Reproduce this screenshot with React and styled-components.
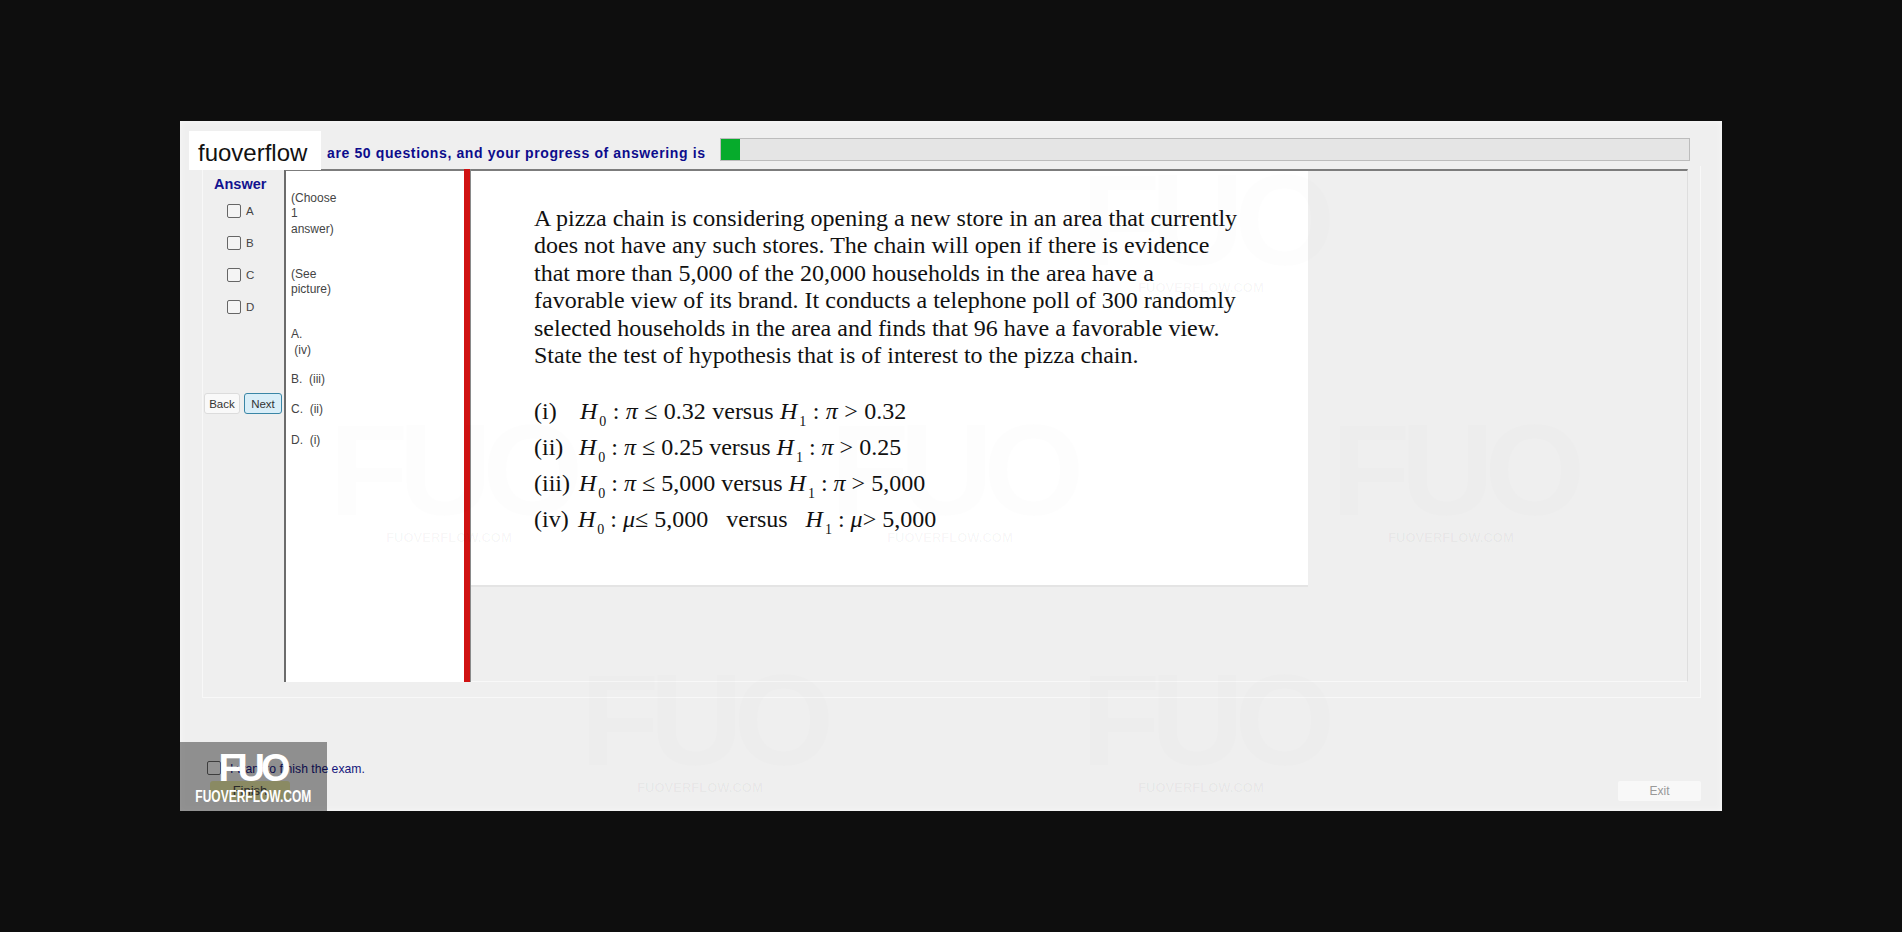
import React from "react";
import styled, { createGlobalStyle } from "styled-components";

const Global = createGlobalStyle`
  html, body { margin: 0; padding: 0; background: #0e0e0e; }
  body { font-family: "Liberation Sans", Arial, sans-serif; }
`;

const Page = styled.div`
  width: 1902px;
  height: 932px;
  padding: 121px 0 0 180px;
  box-sizing: border-box;
  overflow: hidden;
`;

const ExamWindow = styled.div`
  position: relative;
  width: 1542px;
  height: 690px;
  box-sizing: border-box;
  padding: 0 21px 10px 22px;
  background: #efefef;
  box-shadow: inset 0 0 6px #f8f8f8;
  display: flex;
  flex-direction: column;
  overflow: hidden;
`;

const Header = styled.div`
  display: flex;
  align-items: center;
  height: 23px;
  margin: 17px 11px 0 125px;
`;

const ProgressText = styled.span`
  width: 393px;
  font-size: 14px;
  font-weight: 700;
  color: #0c0c8c;
  white-space: nowrap;
  letter-spacing: 0.62px;
  padding-top: 7px;
`;

const ProgressTrack = styled.div`
  flex: 1;
  height: 100%;
  box-sizing: border-box;
  background: #e5e5e5;
  border: 1px solid #bcbcbc;
`;

const ProgressFill = styled.div`
  height: 100%;
  background: #06ab2c;
`;

const GroupBox = styled.div`
  display: flex;
  height: 532px;
  margin-top: 5px;
  box-sizing: border-box;
  padding: 3px 12px 15px 0;
  border: 1px solid #f8f8f8;
  border-top: 0;
`;

const AnswerColumn = styled.div`
  width: 81px;
  flex: none;
  display: flex;
  flex-direction: column;
  align-items: flex-start;
`;

const AnswerTitle = styled.div`
  margin: 7px 0 0 11px;
  font-size: 14.5px;
  font-weight: 700;
  line-height: 16px;
  color: #13138f;
`;

const AnswerList = styled.div`
  display: flex;
  flex-direction: column;
  gap: 19px;
  margin: 12px 0 0 24px;
`;

const AnswerRow = styled.label`
  display: flex;
  align-items: center;
  gap: 5px;
  height: 13px;
  font-size: 11.5px;
  color: #444;
`;

const Box = styled.span`
  width: 12px;
  height: 12px;
  flex: none;
  background: #f4f4f4;
  border: 1px solid #666;
  border-radius: 2px;
`;

const NavRow = styled.div`
  display: flex;
  gap: 4px;
  margin: 80px 0 0 1px;
`;

const NavButton = styled.div`
  display: flex;
  align-items: center;
  justify-content: center;
  height: 21px;
  width: ${(p) => (p.$primary ? "38px" : "36px")};
  box-sizing: border-box;
  font-size: 11.5px;
  color: #333;
  border-radius: 3px;
  background: ${(p) => (p.$primary ? "#d9eef8" : "#f9f9f9")};
  border: 1px solid ${(p) => (p.$primary ? "#3a86a6" : "#dcdcdc")};
`;

const OptionPane = styled.div`
  width: 180px;
  flex: none;
  box-sizing: border-box;
  background: #fff;
  border-left: 2px solid #6c6c6c;
  border-top: 2px solid #7c7c7c;
  padding: 20px 5px 0;
  font-size: 12px;
  line-height: 15.3px;
  color: #444;
`;

const OptionBlock = styled.div`
  margin-bottom: ${(p) => p.$gap}px;
  white-space: pre;
`;

const Splitter = styled.div`
  width: 7px;
  flex: none;
  box-sizing: border-box;
  background: #d01212;
  border-right: 1px solid #8a8a8a;
`;

const ImagePane = styled.div`
  flex: 1;
  border-top: 2px solid #7c7c7c;
  border-right: 1px solid #dedede;
  border-bottom: 1px solid #f8f8f8;
`;

const QuestionImage = styled.div`
  width: 837px;
  height: 414px;
  box-sizing: border-box;
  padding: 34px 0 0 63px;
  background: #fff;
  box-shadow: 0 2px 0 #e4e4e4;
  font-family: "Liberation Serif", "Times New Roman", serif;
  font-size: 24px;
  color: #111;
`;

const Paragraph = styled.p`
  margin: 0 0 25px;
  line-height: 27.4px;
  white-space: pre;
`;

const Formula = styled.div`
  display: flex;
  height: 35.7px;
  line-height: 35.7px;
  white-space: pre;
`;

const FormulaLabel = styled.span`
  width: ${(p) => p.$w}px;
  flex: none;
`;

const FormulaBody = styled.span`
  word-spacing: ${(p) => p.$spacing}px;
`;

const Sub = styled.sub`
  margin-left: 2px;
  font-size: 14px;
  font-style: normal;
  line-height: 0;
  vertical-align: -7px;
`;

const Footer = styled.div`
  flex: 1;
  display: flex;
  justify-content: space-between;
  align-items: flex-end;
`;

const FinishColumn = styled.div`
  display: flex;
  flex-direction: column;
  align-items: flex-start;
  align-self: stretch;
  padding: 62px 0 0 5px;
`;

const FinishCheck = styled.label`
  display: flex;
  align-items: center;
  gap: 9px;
  font-size: 12.2px;
  color: #16167c;
  white-space: nowrap;
`;

const FinishLabel = styled.span`
  padding-top: 2px;
`;

const FinishButton = styled.div`
  width: 80px;
  height: 19px;
  margin: 5px 0 0 3px;
  border-radius: 3px;
  background: #e6e6a6;
  color: #444;
  font-size: 13px;
  line-height: 19px;
  text-align: center;
`;

const ExitButton = styled.div`
  width: 83px;
  height: 20px;
  background: #f8f8f8;
  color: #999;
  font-size: 12px;
  line-height: 20px;
  text-align: center;
  border-radius: 2px;
`;

const BrandChip = styled.div`
  position: absolute;
  left: 9px;
  top: 10px;
  width: 132px;
  height: 39px;
  padding: 8px 0 0 9px;
  box-sizing: border-box;
  background: #fff;
  font-size: 24px;
  line-height: 28px;
  color: #111;
`;

const WatermarkBox = styled.div`
  position: absolute;
  left: 0;
  bottom: 0;
  width: 147px;
  height: 69px;
  background: rgba(0, 0, 0, 0.4);
  color: #fff;
  display: flex;
  flex-direction: column;
  align-items: center;
`;

const WatermarkLogo = styled.div`
  margin: 5px 0 0 -2px;
  height: 41px;
  font-size: 38px;
  font-weight: 700;
  line-height: 42px;
  letter-spacing: -4px;
`;

const WatermarkUrl = styled.div`
  font-family: "Liberation Sans Narrow", "Liberation Sans", sans-serif;
  font-size: 16px;
  font-weight: 700;
  line-height: 17px;
  white-space: nowrap;
  transform: scaleX(0.75);
`;

const Ghost = styled.div`
  position: absolute;
  left: ${(p) => p.$x - 180}px;
  top: ${(p) => p.$y - 121}px;
  width: 240px;
  transform: translateX(-50%);
  text-align: center;
  color: rgba(0, 0, 0, 0.035);
  pointer-events: none;
`;

const GhostLogo = styled.div`
  font-size: 130px;
  font-weight: 700;
  line-height: 120px;
  letter-spacing: -10px;
  color: rgba(0, 0, 0, 0.006);
`;

const GhostUrl = styled.div`
  font-size: 13px;
  font-weight: 700;
  line-height: 16px;
`;

const ghosts = [
  [449, 410],
  [950, 410],
  [1451, 410],
  [700, 660],
  [1201, 660],
  [1201, 160],
];

const formulas = [
  { label: "(i)", w: 46, k: "π", a: "0.32", sp: 0.4 },
  { label: "(ii)", w: 45, k: "π", a: "0.25", sp: 0 },
  { label: "(iii)", w: 45, k: "π", a: "5,000", sp: 0 },
  { label: "(iv)", w: 44, k: "μ", a: "5,000", sp: 0, wide: true },
];

export default function App() {
  return (
    <Page>
      <Global />
      <ExamWindow>
        <Header>
          <ProgressText>are 50 questions, and your progress of answering is</ProgressText>
          <ProgressTrack>
            <ProgressFill style={{ width: `${(1 / 50) * 100}%` }} />
          </ProgressTrack>
        </Header>
        <GroupBox>
          <AnswerColumn>
            <AnswerTitle>Answer</AnswerTitle>
            <AnswerList>
              {["A", "B", "C", "D"].map((l) => (
                <AnswerRow key={l}>
                  <Box />
                  {l}
                </AnswerRow>
              ))}
            </AnswerList>
            <NavRow>
              <NavButton>Back</NavButton>
              <NavButton $primary>Next</NavButton>
            </NavRow>
          </AnswerColumn>
          <OptionPane>
            <OptionBlock $gap={30}>{"(Choose\n1\nanswer)"}</OptionBlock>
            <OptionBlock $gap={30}>{"(See\npicture)"}</OptionBlock>
            <OptionBlock $gap={14}>{"A.\n (iv)"}</OptionBlock>
            <OptionBlock $gap={15}>{"B.  (iii)"}</OptionBlock>
            <OptionBlock $gap={15}>{"C.  (ii)"}</OptionBlock>
            <OptionBlock $gap={0}>{"D.  (i)"}</OptionBlock>
          </OptionPane>
          <Splitter />
          <ImagePane>
            <QuestionImage>
              <Paragraph>
                {`A pizza chain is considering opening a new store in an area that currently
does not have any such stores. The chain will open if there is evidence
that more than 5,000 of the 20,000 households in the area have a
favorable view of its brand. It conducts a telephone poll of 300 randomly
selected households in the area and finds that 96 have a favorable view.
State the test of hypothesis that is of interest to the pizza chain.`}
              </Paragraph>
              {formulas.map((f) => (
                <Formula key={f.label}>
                  <FormulaLabel $w={f.w}>{f.label}</FormulaLabel>
                  <FormulaBody $spacing={f.sp}>
                    <i>H</i>
                    <Sub>0</Sub> : <i>{f.k}</i>
                    {f.wide ? "≤ " : " ≤ "}
                    {f.a}
                    {f.wide ? "   versus   " : " versus "}
                    <i>H</i>
                    <Sub>1</Sub> : <i>{f.k}</i>
                    {f.wide ? "> " : " > "}
                    {f.a}
                  </FormulaBody>
                </Formula>
              ))}
            </QuestionImage>
          </ImagePane>
        </GroupBox>
        <Footer>
          <FinishColumn>
            <FinishCheck>
              <Box />
              <FinishLabel>I want to finish the exam.</FinishLabel>
            </FinishCheck>
            <FinishButton>Finish</FinishButton>
          </FinishColumn>
          <ExitButton>Exit</ExitButton>
        </Footer>
        {ghosts.map(([x, y]) => (
          <Ghost key={`${x}-${y}`} $x={x} $y={y}>
            <GhostLogo>FUO</GhostLogo>
            <GhostUrl>FUOVERFLOW.COM</GhostUrl>
          </Ghost>
        ))}
        <BrandChip>fuoverflow</BrandChip>
        <WatermarkBox>
          <WatermarkLogo>FUO</WatermarkLogo>
          <WatermarkUrl>FUOVERFLOW.COM</WatermarkUrl>
        </WatermarkBox>
      </ExamWindow>
    </Page>
  );
}
